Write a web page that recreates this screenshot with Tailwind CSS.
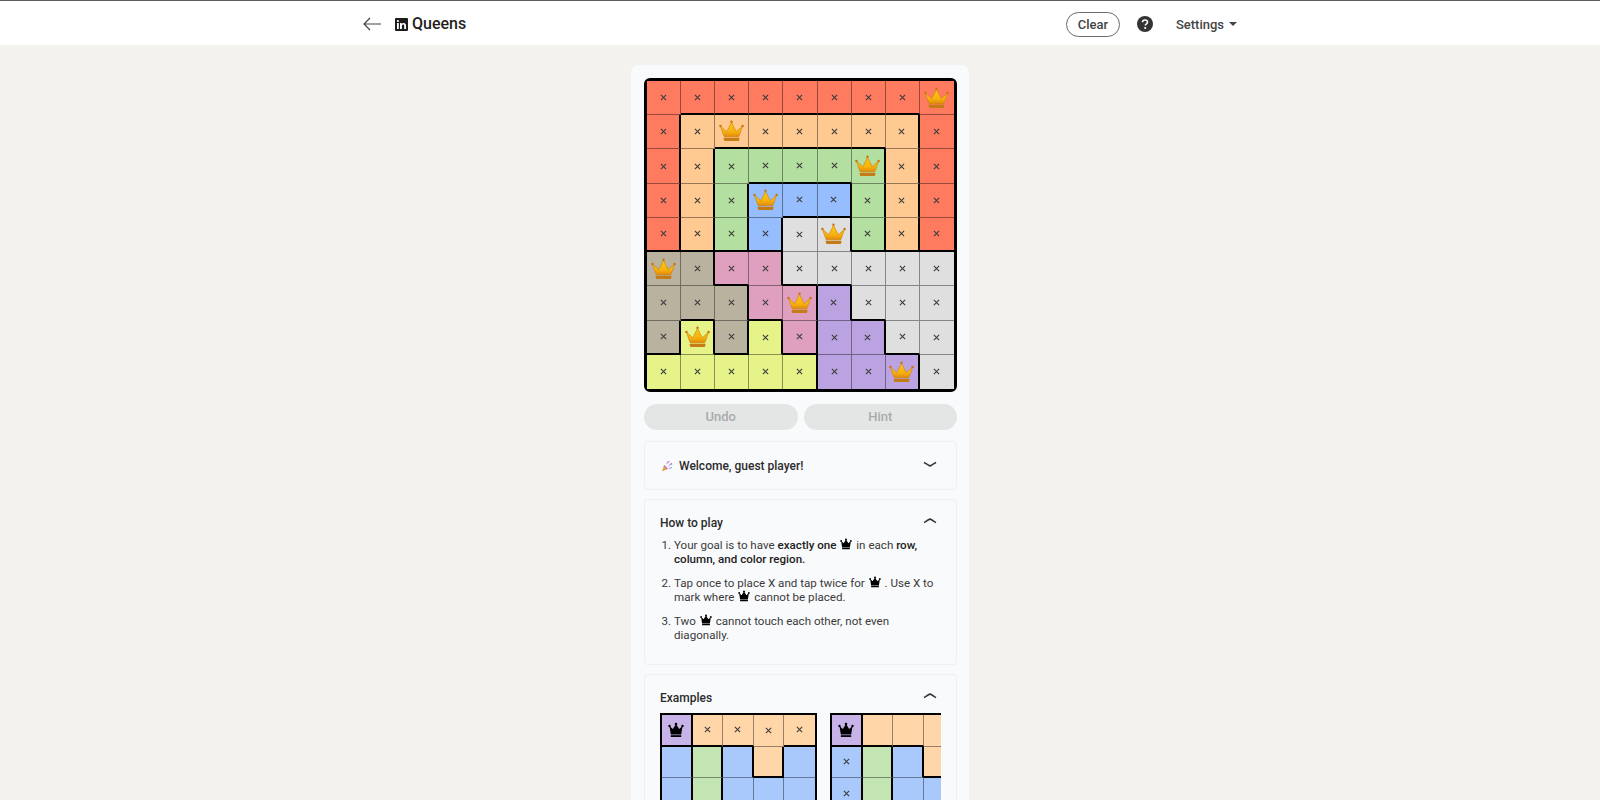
<!DOCTYPE html>
<html lang="en">
  <head>
    <meta charset="UTF-8" />
    <title>Queens</title>
    <script src="https://cdn.jsdelivr.net/npm/@tailwindcss/browser@4"></script>
  </head>
  <body class="h-[800px] overflow-hidden bg-[#f4f2ee] font-['Roboto',sans-serif] text-[#1f1f1f]">
    <!-- shared icons -->
    <svg class="absolute h-0 w-0">
      <defs>
        <linearGradient id="gold" x1="0" y1="0" x2="0" y2="1">
          <stop offset="0" stop-color="#fbc913" />
          <stop offset="0.65" stop-color="#f7b20e" />
          <stop offset="1" stop-color="#e2880a" />
        </linearGradient>
      </defs>
      <symbol id="crown-gold" viewBox="0 0 24 21">
        <path d="M1.6 6.2C4 8 5.8 9.6 7.4 11.2 8.8 8.4 10.6 5.4 12 2.2c1.4 3.2 3.200 6.200 4.600 9 1.600-1.600 3.400-3.200 5.800-5-1 3.600-2.100 6.800-3.400 9.800H5C3.700 13 2.600 9.800 1.600 6.200Z" fill="url(#gold)" stroke="#c9820f" stroke-width="0.6" />
        <circle cx="12" cy="1.700" r="1.200" fill="#c9760f" />
        <circle cx="1.400" cy="5.800" r="1.200" fill="#c9760f" />
        <circle cx="22.600" cy="5.800" r="1.200" fill="#c9760f" />
        <path d="M5 17h14a.8.8 0 0 1 .6 1.200l-.6 1.800H5.200l-.7-1.800A.8.8 0 0 1 5 17Z" fill="#c67c14" />
      </symbol>
      <symbol id="crown-black" viewBox="0 0 16 16">
        <path d="M1.500 4 4.800 7 8 2l3.200 5 3.300-3-1.300 8.500H2.800Z" fill="#000" />
        <circle cx="8" cy="2" r="1.300" fill="#000" />
        <circle cx="1.500" cy="4" r="1.200" fill="#000" />
        <circle cx="14.500" cy="4" r="1.200" fill="#000" />
        <rect x="2.800" y="13.200" width="10.400" height="1.800" fill="#000" />
      </symbol>
      <symbol id="mark" viewBox="0 0 8 8">
        <path d="M1 1l6 6M7 1 1 7" stroke="#3d3d3d" stroke-width="1.250" fill="none" />
      </symbol>
      <symbol id="chevron" viewBox="0 0 16 16">
        <path d="M2 5.500c2.200 1.300 4.200 2.500 6 3.500 1.800-1 3.800-2.200 6-3.500" stroke="#333" stroke-width="1.500" fill="none" />
      </symbol>
    </svg>

    <!-- Top bar -->
    <header class="h-[45px] border-t border-[#5c5c60] bg-white">
      <div class="mx-auto flex h-[46px] w-[874px] items-center justify-between">
        <div class="flex items-center">
          <svg class="h-[14px] w-[18px] text-[#444]" viewBox="0 0 18 14" fill="none" stroke="currentColor" stroke-width="1.200">
            <path d="M18 7H1M7 1 1 7l6 6" />
          </svg>
          <svg class="ml-[14px] h-[13px] w-[13px]" viewBox="0 0 13 13">
            <rect width="13" height="13" rx="1" fill="#1d1d1d" />
            <rect x="2" y="5" width="1.800" height="6" fill="#fff" />
            <circle cx="2.900" cy="3" r="1.100" fill="#fff" />
            <path d="M5 5h1.700v.9c.4-.6 1-1 1.900-1 1.500 0 2.400.9 2.400 2.700V11H9.200V7.900c0-.9-.3-1.400-1-1.400-.8 0-1.300.6-1.300 1.500v3H5Z" fill="#fff" />
          </svg>
          <h1 class="ml-[4px] text-[16px] leading-none font-medium text-[#1f1f1f]">Queens</h1>
        </div>
        <div class="flex items-center">
          <button class="h-[25px] w-[54px] rounded-full border border-[#6b6b6b] text-[13px] leading-none font-medium text-[#444]">Clear</button>
          <svg class="ml-[17px] h-[16px] w-[16px]" viewBox="0 0 16 16">
            <circle cx="8" cy="8" r="8" fill="#333" />
            <path d="M5.500 6.200C5.600 4.800 6.600 4 8 4s2.500.8 2.500 2.100c0 1-.6 1.500-1.300 2-.6.400-.9.700-.9 1.300v.2" fill="none" stroke="#fff" stroke-width="1.600" />
            <circle cx="8.200" cy="12" r="1.100" fill="#fff" />
          </svg>
          <span class="ml-[23px] text-[13px] leading-none font-medium text-[#444]">Settings</span>
          <span class="ml-[5px] h-0 w-0 border-x-[4px] border-t-[4px] border-x-transparent border-t-[#444]"></span>
        </div>
      </div>
    </header>

    <!-- Game card -->
    <main class="mx-auto mt-5 w-[338px] rounded-lg bg-[#f9fafb] px-[13px] pt-[13px] pb-6">
      <div id="board" class="grid h-[314px] w-[313px] grid-cols-9 grid-rows-9 rounded-[6px] border-[3px] border-black"></div>

      <div class="mt-3 flex w-[313px] gap-[6px]">
        <button class="h-[26px] flex-1 rounded-full bg-[#e4e6e6] text-[13px] font-medium text-[#a9abab]">Undo</button>
        <button class="h-[26px] flex-1 rounded-full bg-[#e4e6e6] text-[13px] font-medium text-[#a9abab]">Hint</button>
      </div>

      <section class="mt-[11px] flex h-[49px] w-[313px] items-center justify-between rounded border border-[#eef0f2] pr-[18px] pl-[16px]">
        <div class="flex items-center gap-[6px] text-[12px] font-medium text-[#2b2b2b]">
          <svg class="h-[12px] w-[12px]" viewBox="0 0 12 12">
            <path d="M1 11.500 3.200 5l3.800 3.800Z" fill="#e8a33d" />
            <path d="M3.200 5 7 8.800l-1.500.8L2.500 6.800Z" fill="#c97fb8" />
            <circle cx="7" cy="2" r="1" fill="#d9a0e0" />
            <circle cx="10.300" cy="4" r="1" fill="#7fa6e8" />
            <path d="M5.500 4 8.500 1M7.500 6l3.500-3M8 8.500l3-1" stroke="#b58ad6" stroke-width="1" fill="none" />
          </svg>
          <span>Welcome, guest player!</span>
        </div>
        <svg class="h-[16px] w-[16px] -translate-y-px"><use href="#chevron" /></svg>
      </section>

      <section class="mt-[9px] h-[166px] w-[313px] rounded border border-[#eef0f2] pt-[14px] pr-[15px] pl-[15px]">
        <div class="flex items-center justify-between pr-[3px]">
          <h2 class="text-[12px] font-medium text-[#2b2b2b]">How to play</h2>
          <svg class="h-[16px] w-[16px] -translate-y-[3px] rotate-180"><use href="#chevron" /></svg>
        </div>
        <ol class="mt-[6px] ml-[14px] flex list-decimal flex-col gap-[10px] text-[11.600px] leading-[14px] text-[#3b3b3b]">
          <li>Your goal is to have <b class="font-medium text-[#222]">exactly one</b> <svg class="relative -top-[2px] mx-[1px] inline h-[12px] w-[12px]"><use href="#crown-black" /></svg> in each <b class="font-medium text-[#222]">row, column, and color region.</b></li>
          <li>Tap once to place X and tap twice for <svg class="relative -top-[2px] mx-[1px] inline h-[12px] w-[12px]"><use href="#crown-black" /></svg> . Use X to mark where <svg class="relative -top-[2px] mx-[1px] inline h-[12px] w-[12px]"><use href="#crown-black" /></svg> cannot be placed.</li>
          <li>Two <svg class="relative -top-[2px] mx-[1px] inline h-[12px] w-[12px]"><use href="#crown-black" /></svg> cannot touch each other, not even diagonally.</li>
        </ol>
      </section>

      <section class="mt-[9px] w-[313px] rounded border border-[#eef0f2] pt-[14px] pr-[15px] pb-4 pl-[15px]">
        <div class="flex items-center justify-between pr-[3px]">
          <h2 class="text-[12px] font-medium text-[#2b2b2b]">Examples</h2>
          <svg class="h-[16px] w-[16px] -translate-y-[3px] rotate-180"><use href="#chevron" /></svg>
        </div>
        <div class="mt-[6px] flex gap-[13px] overflow-hidden">
          <div id="example-1" class="grid w-[157px] shrink-0 auto-rows-[31.500px] grid-cols-5 border-2 border-black"></div>
          <div id="example-2" class="grid w-[157px] shrink-0 auto-rows-[31.500px] grid-cols-5 border-2 border-black"></div>
        </div>
      </section>
    </main>

    <script>
      const regions = [
        "RRRRRRRRR",
        "ROOOOOOOR",
        "ROGGGGGOR",
        "ROGBBBGOR",
        "ROGBWWGOR",
        "TTPPWWWWW",
        "TTTPPVWWW",
        "TYTYPVVWW",
        "YYYYYVVVW",
      ];
      const crowns = ["0,8", "1,2", "2,6", "3,3", "4,5", "5,0", "6,4", "7,1", "8,7"];
      const colors = {
        R: "bg-[#ff7b60]",
        O: "bg-[#ffc992]",
        G: "bg-[#b3dfa0]",
        B: "bg-[#96beff]",
        W: "bg-[#dfdfdf]",
        T: "bg-[#b9b29e]",
        P: "bg-[#dfa0bf]",
        V: "bg-[#bba3e2]",
        Y: "bg-[#e6f388]",
      };
      const exampleRegions = ["VOOOO", "BGBOB", "BGBBB", "BGBBB", "BGBBB"];
      const exampleColors = {
        V: "bg-[#c8b3e8]",
        O: "bg-[#ffd6a8]",
        G: "bg-[#c3e4b3]",
        B: "bg-[#a9c9fd]",
      };

      function renderGrid(el, map, palette, content) {
        const rows = map.length;
        const cols = map[0].length;
        let html = "";
        for (let r = 0; r < rows; r++) {
          for (let c = 0; c < cols; c++) {
            const k = map[r][c];
            let cls = palette[k] + " flex items-center justify-center";
            if (c < cols - 1) {
              cls += k !== map[r][c + 1] ? " border-r-2 border-r-black" : " border-r border-r-black/40";
            }
            if (r < rows - 1) {
              cls += k !== map[r + 1][c] ? " border-b-2 border-b-black" : " border-b border-b-black/40";
            }
            html += `<div class="${cls}">${content(r, c)}</div>`;
          }
        }
        el.innerHTML = html;
      }

      const mark = `<svg class="h-[7px] w-[7px]"><use href="#mark" /></svg>`;

      renderGrid(document.getElementById("board"), regions, colors, (r, c) =>
        crowns.includes(r + "," + c)
          ? `<svg class="h-[22px] w-[25px]"><use href="#crown-gold" /></svg>`
          : mark
      );

      const blackCrown = `<svg class="h-[16px] w-[16px]"><use href="#crown-black" /></svg>`;
      renderGrid(document.getElementById("example-1"), exampleRegions, exampleColors, (r, c) =>
        r === 0 && c === 0 ? blackCrown : r === 0 ? mark : ""
      );
      renderGrid(document.getElementById("example-2"), exampleRegions, exampleColors, (r, c) =>
        r === 0 && c === 0 ? blackCrown : c === 0 ? mark : ""
      );
    </script>
  </body>
</html>
